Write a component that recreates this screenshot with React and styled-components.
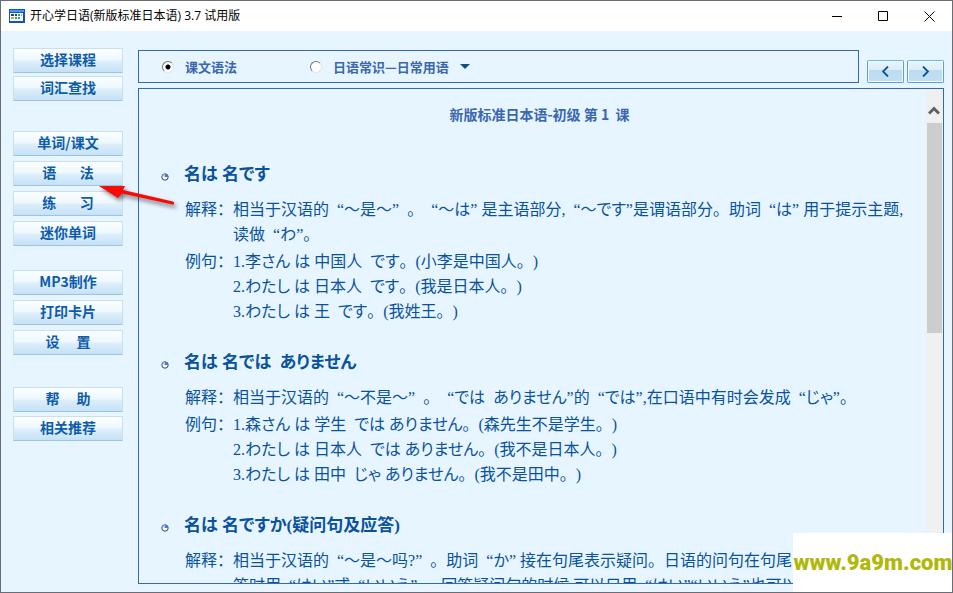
import React from 'react'
import styled, { createGlobalStyle, css } from 'styled-components'

const menuGroups = [
  { space: 30, gap: 3, items: ['选择课程', '词汇查找'] },
  { space: 24, gap: 5, items: ['单词/课文', '语\u3000   法', '练\u3000   习', '迷你单词'] },
  { space: 32, gap: 5, items: ['MP3制作', '打印卡片', '设\u3000 置'] },
  { space: 0, gap: 4, items: ['帮\u3000 助', '相关推荐'] },
]

const lessons = [
  {
    title: '名は 名です',
    notes: [
      '相当于汉语的  “～是～”  。  “～は” 是主语部分,  “～です”是谓语部分。助词  “は” 用于提示主题,',
      '读做  “わ”。',
    ],
    examples: [
      '1.李さん は 中国人  です。(小李是中国人。)',
      '2.わたし は 日本人  です。(我是日本人。)',
      '3.わたし は 王  です。(我姓王。)',
    ],
  },
  {
    title: '名は 名では  ありません',
    notes: [
      '相当于汉语的  “～不是～”  。  “では  ありません”的  “では”,在口语中有时会发成  “じゃ”。',
    ],
    examples: [
      '1.森さん は 学生  では ありません。(森先生不是学生。)',
      '2.わたし は 日本人  では ありません。(我不是日本人。)',
      '3.わたし は 田中  じゃ ありません。(我不是田中。)',
    ],
  },
  {
    title: '名は 名ですか(疑问句及应答)',
    notes: [
      '相当于汉语的  “～是～吗?”  。助词  “か” 接在句尾表示疑问。日语的问句在句尾',
      '答时用  “はい”或  “いいえ”  。回答疑问句的时候,可以只用  “はい”“いいえ”也可以',
    ],
    examples: [],
  },
]

// kana is set proportionally, everything else keeps its full width
function Mixed({ text }) {
  return text
    .split(/([\u3041-\u309f]+)/)
    .map((part, i) => (i % 2 ? <Kana key={i} lang="ja">{part}</Kana> : part))
}

function AppIcon() {
  return (
    <svg width="16" height="14" viewBox="0 0 16 14" shapeRendering="crispEdges">
      <rect width="16" height="14" rx="1" fill="#1d4fb8" />
      <rect x="1" y="1" width="14" height="2" fill="#3f9bf0" />
      <rect x="1" y="4" width="13" height="8" fill="#f2f8ff" />
      <path d="M2 5h3v2h-3zM6 5h2v2h-2z" fill="#27427c" />
      <path d="M9 5h2v2h-2zM6 8h2v2h-2z" fill="#2fa84f" />
      <path d="M12 5h1v2h-1zM2 8h3v2h-3z" fill="#e0a020" />
      <path d="M9 8h2v2h-2z" fill="#3f7fe0" />
    </svg>
  )
}

function Bullet() {
  return (
    <svg width="8" height="8" viewBox="0 0 8 8">
      <circle cx="4" cy="4" r="3.2" fill="#f4f8ff" stroke="#3c4468" strokeWidth="1" />
      <path d="M4 4V1a3 3 0 0 1 3 3z" fill="#4a78d8" />
      <path d="M4 4V1a3 3 0 0 0-2.6 1.6z" fill="#a9c4ee" />
    </svg>
  )
}

function App() {
  return (
    <Window>
      <GlobalStyle />
      <TitleBar>
        <AppIcon />
        <Caption>开心学日语(新版标准日本语) 3.7 试用版</Caption>
        <CaptionButton aria-label="minimize">
          <svg width="11" height="11" viewBox="0 0 11 11"><path d="M0 5.5h10" /></svg>
        </CaptionButton>
        <CaptionButton aria-label="maximize">
          <svg width="11" height="11" viewBox="0 0 11 11"><path d="M.5.5h9v9h-9z" /></svg>
        </CaptionButton>
        <CaptionButton aria-label="close">
          <svg width="11" height="11" viewBox="0 0 11 11"><path d="M.5.5l10 10M10.5.5l-10 10" /></svg>
        </CaptionButton>
      </TitleBar>

      <Body>
        <Sidebar>
          {menuGroups.map((group) => (
            <MenuGroup key={group.items[0]} $space={group.space} $gap={group.gap}>
              {group.items.map((item) => (
                <MenuButton key={item}>{item}</MenuButton>
              ))}
            </MenuGroup>
          ))}
        </Sidebar>

        <Main>
          <Toolbar>
            <Options>
              <Option $width={148}>
                <input type="radio" name="section" defaultChecked />
                课文语法
              </Option>
              <Option>
                <input type="radio" name="section" />
                日语常识—日常用语
                <svg width="10" height="5" viewBox="0 0 10 5"><path d="M0 0h10L5 5z" fill="#10527f" /></svg>
              </Option>
            </Options>
            <NavButton aria-label="previous">
              <svg width="7" height="11" viewBox="0 0 7 11"><path d="M6 .5l-5 5 5 5" /></svg>
            </NavButton>
            <NavButton aria-label="next">
              <svg width="7" height="11" viewBox="0 0 7 11"><path d="M1 .5l5 5-5 5" /></svg>
            </NavButton>
          </Toolbar>

          <Pane>
            <Article>
              <LessonTitle>新版标准日本语-初级 第 1&nbsp; 课</LessonTitle>
              {lessons.map((lesson) => (
                <Lesson key={lesson.title}>
                  <Heading>
                    <Bullet />
                    <span><Mixed text={lesson.title} /></span>
                  </Heading>
                  <Entry>
                    <dt>解释：</dt>
                    <dd>
                      {lesson.notes.map((line) => (
                        <Line key={line}><Mixed text={line} /></Line>
                      ))}
                    </dd>
                    {lesson.examples.length > 0 && (
                      <>
                        <dt>例句：</dt>
                        <dd>
                          {lesson.examples.map((line) => (
                            <Line key={line}><Mixed text={line} /></Line>
                          ))}
                        </dd>
                      </>
                    )}
                  </Entry>
                </Lesson>
              ))}
            </Article>
            <ScrollTrack>
              <ScrollButton aria-label="scroll up">
                <svg width="12" height="9" viewBox="0 0 12 9"><path d="M1 7.500l5-5 5 5" /></svg>
              </ScrollButton>
              <ScrollThumb />
            </ScrollTrack>
          </Pane>
        </Main>
      </Body>

      <Pointer width="90" height="34" viewBox="0 0 90 34">
        <path d="M2 5l26 0-2 4 50 11.500a1.500 1.500 0 0 1-.8 3L25 12.500 21 17z" fill="#fb0a05" />
      </Pointer>
      <Watermark>www.9a9m.com</Watermark>
    </Window>
  )
}

const GlobalStyle = createGlobalStyle`
  * {
    box-sizing: border-box;
  }
  body {
    margin: 0;
    font-family: 'Noto Sans CJK SC', sans-serif;
  }
  button {
    padding: 0;
    font-family: inherit;
  }
`

const Window = styled.div`
  position: relative;
  display: flex;
  flex-direction: column;
  height: 100vh;
  overflow: hidden;
  border: 1px solid #6c6c74;
  background: #e6f5ff;
`

const TitleBar = styled.header`
  display: flex;
  flex: none;
  align-items: center;
  height: 30px;
  padding-left: 8px;
  background: #fff;
`

const Caption = styled.span`
  flex: 1;
  padding-left: 5px;
  font-family: 'Open Sans', 'Noto Sans CJK SC', sans-serif;
  font-size: 12px;
  line-height: 16px;
  color: #000;
`

const CaptionButton = styled.button`
  display: flex;
  align-items: center;
  justify-content: center;
  width: 46px;
  height: 30px;
  border: 0;
  background: none;

  svg {
    fill: none;
    stroke: #000;
  }
`

const Body = styled.div`
  display: flex;
  flex: 1;
  min-height: 0;
  gap: 15px;
  padding: 17px 8px 8px 12px;
`

const Sidebar = styled.nav`
  width: 110px;
`

const MenuGroup = styled.div`
  display: flex;
  flex-direction: column;
  gap: ${(props) => props.$gap}px;
  margin-bottom: ${(props) => props.$space}px;
`

const MenuButton = styled.button`
  height: 25px;
  padding-bottom: 3px;
  border: 1px solid #c9e0ef;
  border-bottom-color: #9dc4e4;
  background: linear-gradient(#fbfeff 0%, #eef8fe 45%, #dceefb 55%, #c6e1f6 100%);
  color: #0d5cab;
  font-size: 14px;
  font-weight: 700;
  line-height: 20px;
  white-space: pre;
`

const Main = styled.main`
  display: flex;
  flex: 1;
  flex-direction: column;
  min-width: 0;
  gap: 5px;
  padding-top: 2px;
`

const Toolbar = styled.div`
  display: flex;
  align-items: flex-end;
  gap: 3px;
`

const Options = styled.div`
  display: flex;
  flex: 1;
  align-items: center;
  height: 33px;
  margin-right: 5px;
  padding-left: 23px;
  border: 1px solid #3668ae;
`

const Option = styled.label`
  display: flex;
  align-items: center;
  color: #3a67ae;
  font-size: 13px;
  font-weight: 700;
  line-height: 20px;
  ${(props) => props.$width && css`width: ${props.$width}px;`}

  input {
    appearance: none;
    width: 12px;
    height: 12px;
    margin: 0 11px 0 0;
    border: 1px solid;
    border-color: #777 #e4e4e4 #e4e4e4 #777;
    border-radius: 50%;
    background: #fff;
  }
  input:checked {
    background: radial-gradient(circle, #000 2px, #fff 3px);
  }
  svg {
    margin-left: 11px;
  }
`

const NavButton = styled.button`
  display: flex;
  align-items: center;
  justify-content: center;
  width: 37px;
  height: 23px;
  border: 1px solid #5e9fcf;
  border-top-color: #6cbcd6;
  border-radius: 2px;
  background: linear-gradient(#e9f4fb 0%, #dcedf9 42%, #bcdcf1 43%, #c2e0f4 100%);
  box-shadow: inset 0 0 0 1px #f3faff;

  svg {
    fill: none;
    stroke: #0c5096;
    stroke-width: 1.8;
  }
`

const Pane = styled.section`
  display: flex;
  flex: 1;
  min-height: 0;
  border: 1px solid #3668ae;
`

const Article = styled.article`
  flex: 1;
  min-width: 0;
  padding: 13px 0 0 22px;
  overflow: hidden;
  color: #0a529c;
  font-family: 'Liberation Serif', 'Noto Sans CJK SC', serif;
  font-size: 16px;
  line-height: 25px;
  text-spacing-trim: space-all;
`

const LessonTitle = styled.h1`
  margin: 0 0 35px;
  padding-right: 8px;
  color: #3a67ae;
  font-family: 'Noto Sans CJK SC', sans-serif;
  font-size: 14px;
  font-weight: 700;
  line-height: 25px;
  text-align: center;
`

const Lesson = styled.section`
  margin-bottom: 26px;
`

const Heading = styled.h2`
  display: flex;
  align-items: center;
  gap: 15px;
  height: 25px;
  margin: 0 0 10px;
  font-size: 17px;
  font-weight: 700;
  white-space: pre;

  svg {
    margin-top: 4px;
  }
`

const Entry = styled.dl`
  display: grid;
  grid-template-columns: 48px 1fr;
  row-gap: 2px;
  margin: 0;
  padding-left: 24px;

  dt {
    height: 25px;
  }
  dd {
    margin: 0;
    min-width: 0;
  }
`

const Line = styled.div`
  height: 25px;
  white-space: pre;
`

const Kana = styled.span`
  font-family: 'Noto Sans CJK JP', sans-serif;
  font-feature-settings: 'palt';
  line-height: 0;
`

const ScrollTrack = styled.div`
  flex: none;
  width: 17px;
  padding-right: 1px;
  background: #f0f0f0;
`

const ScrollButton = styled.button`
  display: flex;
  align-items: center;
  justify-content: center;
  width: 100%;
  height: 34px;
  padding-top: 8px;
  border: 0;
  background: none;

  svg {
    fill: none;
    stroke: #606060;
    stroke-width: 3;
  }
`

const ScrollThumb = styled.div`
  height: 210px;
  margin-left: 1px;
  background: #cdcdcd;
`

const Pointer = styled.svg`
  position: absolute;
  top: 180px;
  left: 96px;
  filter: drop-shadow(2px 3px 2px rgba(0, 0, 0, 0.5));
  pointer-events: none;
`

const Watermark = styled.div`
  position: absolute;
  right: -1px;
  bottom: -1px;
  width: 160px;
  height: 60px;
  background: #fff;
  color: #b1b80c;
  font-family: Roboto, sans-serif;
  font-size: 22px;
  font-weight: 900;
  line-height: 60px;
  text-align: center;
`

export default App
